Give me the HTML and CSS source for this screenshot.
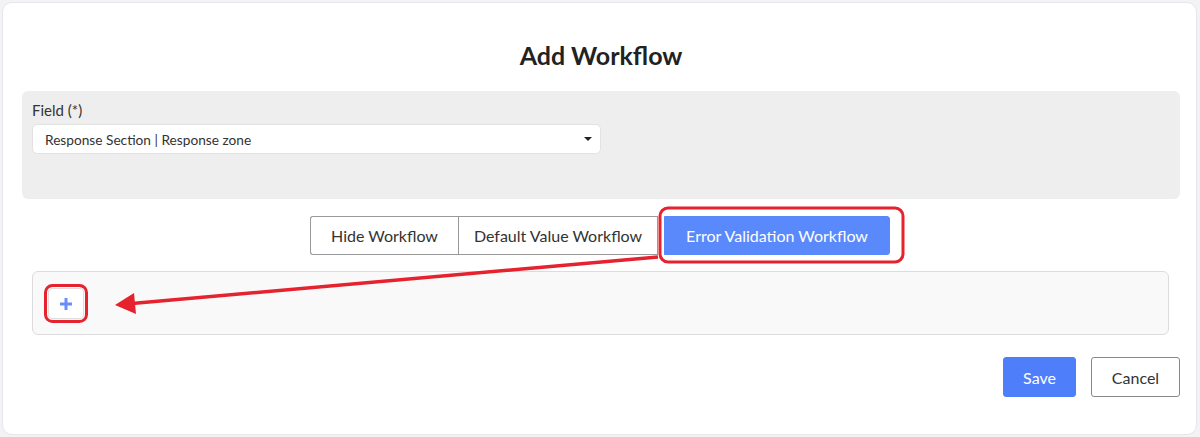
FILE: index.html
```html
<!DOCTYPE html>
<html lang="en">
<head>
  <meta charset="UTF-8">
  <title>Add Workflow</title>
  <link rel="stylesheet" href="styles.css">
</head>
<body>
  <div class="card">
    <h2 class="title">Add Workflow</h2>

    <!-- Field selector -->
    <div class="field-panel">
      <label class="field-label">Field (*)</label>
      <div class="select">
        <span>Response Section | Response zone</span>
        <span class="caret"></span>
      </div>
    </div>

    <!-- Workflow type tabs -->
    <div class="tabs">
      <button class="tab">Hide Workflow</button>
      <button class="tab tab-default">Default Value Workflow</button>
      <button class="tab active">Error Validation Workflow</button>
    </div>

    <div class="workflow-area">
      <button class="add-btn">
        <svg width="14" height="14" viewBox="0 0 14 14"><path d="M7 1v12M1 7h12" stroke="#6a8cff" stroke-width="3"/></svg>
      </button>
    </div>

    <div class="footer">
      <button class="btn btn-save">Save</button>
      <button class="btn btn-cancel">Cancel</button>
    </div>
  </div>

  <!-- Annotation overlay -->
  <svg class="annotations" width="1200" height="437" viewBox="0 0 1200 437">
    <rect x="660" y="208" width="243" height="54" rx="8" fill="none" stroke="#e5222e" stroke-width="3"/>
    <rect x="45.5" y="285.5" width="41" height="36" rx="7" fill="none" stroke="#e5222e" stroke-width="3"/>
    <line x1="658" y1="257" x2="132" y2="303.5" stroke="#e5222e" stroke-width="3.5"/>
    <polygon points="115,305 134,293 136,314" fill="#e5222e"/>
  </svg>
</body>
</html>
```

FILE: styles.css
```css
body {
  margin: 0;
  padding: 2px 3px 2px 2px;
  background-color: #f3f3f6;
  font-family: Lato, "Open Sans", Arial, sans-serif;
  color: #333;
}

.card {
  box-sizing: border-box;
  height: 433px;
  background-color: #fff;
  border: 1px solid #e6e6eb;
  border-radius: 10px;
  padding: 0 16px 0 19px;
}

.title {
  margin: 36px 0 0 0;
  line-height: 32px;
  font-size: 25px;
  font-weight: 700;
  text-align: center;
  color: #222;
}

/* Field panel */
.field-panel {
  margin-top: 20px;
  height: 108px;
  box-sizing: border-box;
  background-color: #eeeeee;
  border-radius: 6px;
  padding: 9px 10px;
}

.field-label {
  display: block;
  font-size: 15px;
  line-height: 20px;
  color: #333;
  margin-bottom: 4px;
}

.select {
  box-sizing: border-box;
  width: 569px;
  height: 30px;
  background-color: #fff;
  border: 1px solid #e2e2e2;
  border-radius: 5px;
  display: flex;
  align-items: center;
  justify-content: space-between;
  padding: 0 8px 0 12px;
  font-size: 13.7px;
  color: #333;
}

.caret {
  width: 0;
  height: 0;
  border-left: 4px solid transparent;
  border-right: 4px solid transparent;
  border-top: 4px solid #222;
}

/* Tabs */
.tabs {
  margin-top: 17px;
  display: flex;
  justify-content: center;
  padding-right: 2px;
}

.tab {
  height: 39px;
  font-family: inherit;
  font-size: 16px;
  color: #333;
  background-color: #fff;
  border: 1px solid #999;
  padding: 0 20px;
  margin: 0;
  cursor: pointer;
}

.tab:first-child {
  border-radius: 3px 0 0 3px;
  border-right: none;
}

.tab-default {
  padding: 0 15px;
}

.tab.active {
  background-color: #5a89fc;
  border-color: #5a89fc;
  color: #fff;
  border-radius: 0 3px 3px 0;
  margin-left: 6px;
  padding: 0 21px;
}

/* Workflow area */
.workflow-area {
  margin: 16px 11px 0 10px;
  height: 64px;
  box-sizing: border-box;
  background-color: #f9f9f9;
  border: 1px solid #dcdcdc;
  border-radius: 6px;
  padding: 16px 0 0 15px;
}

.add-btn {
  width: 36px;
  height: 31px;
  background-color: #fff;
  border: 1px solid #ddd;
  border-radius: 4px;
  display: flex;
  align-items: center;
  justify-content: center;
  padding: 0;
  cursor: pointer;
}

/* Footer */
.footer {
  margin-top: 22px;
  display: flex;
  justify-content: flex-end;
  gap: 15px;
}

.btn {
  height: 40px;
  font-family: inherit;
  font-size: 16px;
  border-radius: 3px;
  cursor: pointer;
}

.btn-save {
  width: 73px;
  background-color: #4f7efa;
  border: 1px solid #4f7efa;
  color: #fff;
}

.btn-cancel {
  width: 89px;
  background-color: #fff;
  border: 1px solid #888;
  color: #333;
}

.annotations {
  position: absolute;
  top: 0;
  left: 0;
  pointer-events: none;
}
```
